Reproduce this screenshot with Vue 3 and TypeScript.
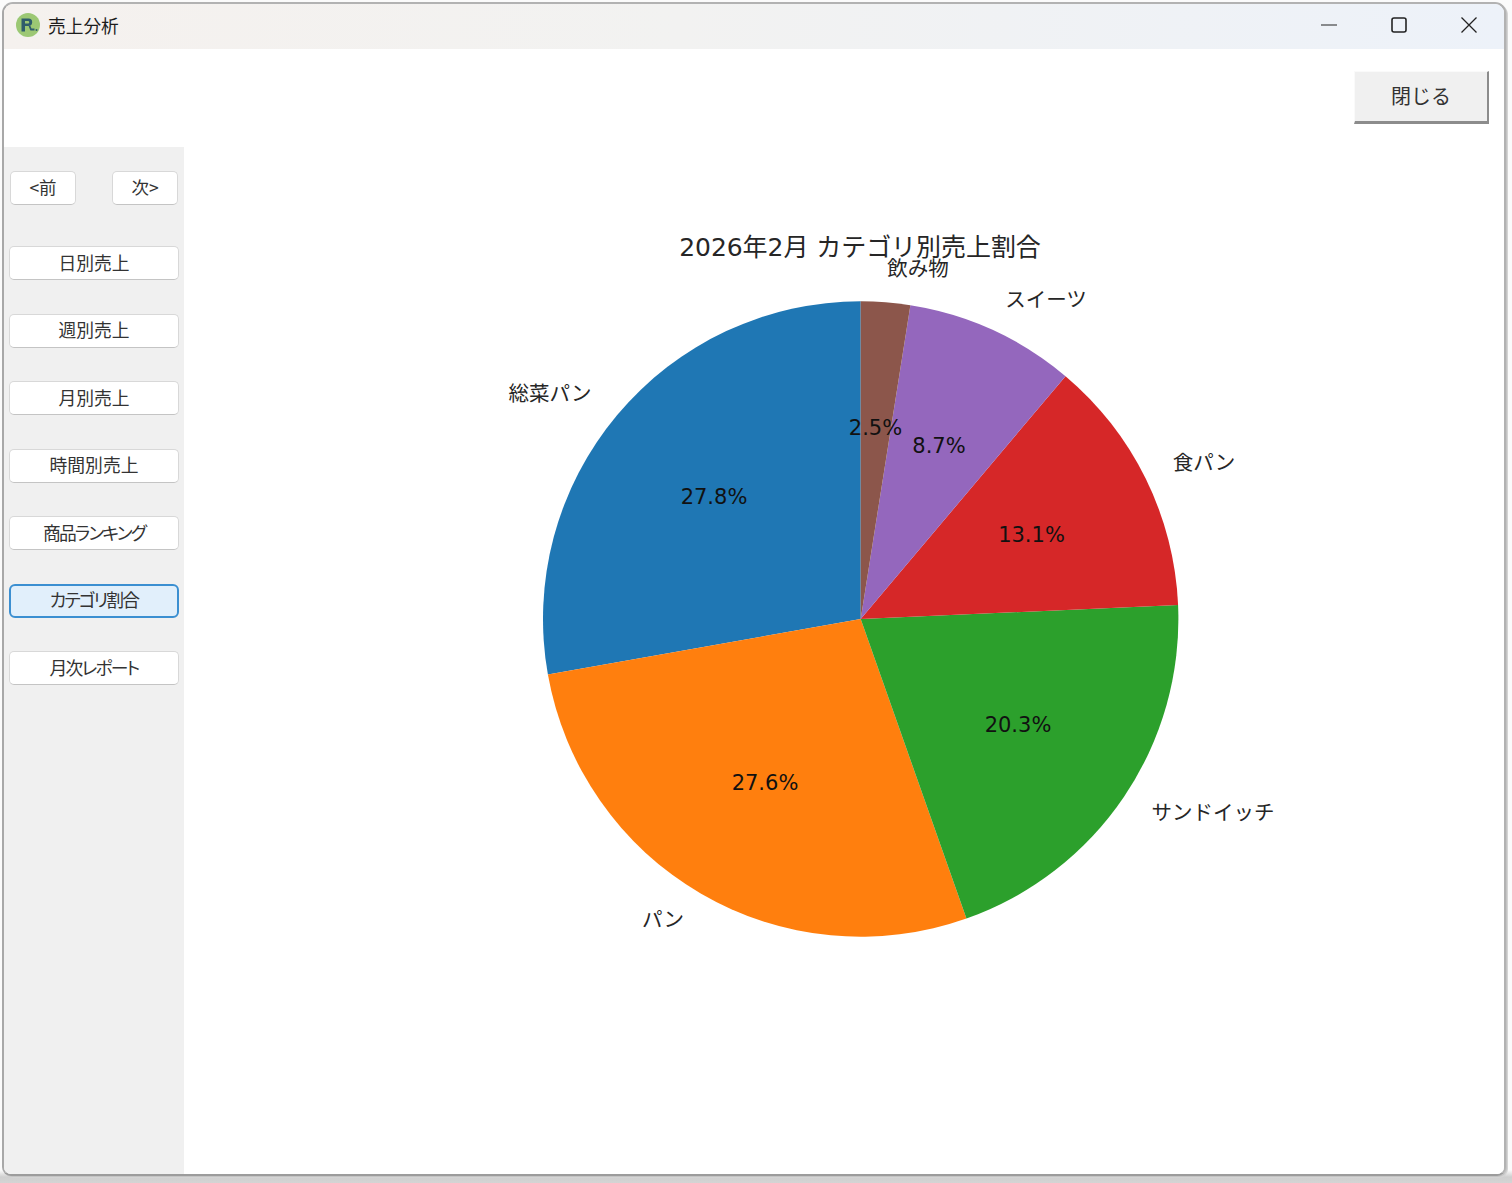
<script setup lang="ts">
interface Slice { pct: number; color: string }
const cx = 676.7
const cy = 472
const r = 317.7
const data: Slice[] = [
  { pct: 27.8, color: '#1f77b4' },
  { pct: 27.6, color: '#ff7f0e' },
  { pct: 20.3, color: '#2ca02c' },
  { pct: 13.15, color: '#d62728' },
  { pct: 8.65, color: '#9467bd' },
  { pct: 2.5, color: '#8c564b' },
]
let acc = 0
const slices = data.map((s) => {
  const a0 = (acc / 100) * Math.PI * 2
  acc += s.pct
  const a1 = (acc / 100) * Math.PI * 2
  const p = (a: number) => `${(cx - r * Math.sin(a)).toFixed(2)} ${(cy - r * Math.cos(a)).toFixed(2)}`
  return { color: s.color, d: `M${cx} ${cy} L${p(a0)} A${r} ${r} 0 0 0 ${p(a1)} Z` }
})
const navs = [
  { label: '日別売上', tight: false },
  { label: '週別売上', tight: false },
  { label: '月別売上', tight: false },
  { label: '時間別売上', tight: false },
  { label: '商品ランキング', tight: true },
  { label: 'カテゴリ割合', tight: true },
  { label: '月次レポート', tight: true },
]
const pcts = [
  { t: '27.8%', x: 530, y: 357 },
  { t: '27.6%', x: 581, y: 643 },
  { t: '20.3%', x: 834, y: 585 },
  { t: '13.1%', x: 847.5, y: 395 },
  { t: '8.7%', x: 755, y: 306 },
  { t: '2.5%', x: 691.5, y: 288 },
]
const labels = [
  { t: '総菜パン', x: 366, y: 254 },
  { t: 'パン', x: 479, y: 780 },
  { t: 'サンドイッチ', x: 1029, y: 673 },
  { t: '食パン', x: 1020, y: 323 },
  { t: 'スイーツ', x: 862, y: 160 },
  { t: '飲み物', x: 734, y: 129 },
]
</script>

<template>
  <div class="screen">
    <div class="window">
      <header class="titlebar">
        <div class="app">
          <svg class="logo" viewBox="0 0 24 24" width="24" height="24">
            <rect width="24" height="24" fill="#f3f3ef" />
            <circle cx="12" cy="12" r="12" fill="#9cc874" />
            <path d="M5.5 5.5h7a3.6 3.6 0 0 1 0 7.4H9v5.6H5.5z M9 8v2.5h3a1.2 1.2 0 0 0 0-2.5z" fill="#2f5d6b" fill-rule="evenodd" />
            <path d="M13.5 13l1.5 3.5h3.5" stroke="#2f5d6b" stroke-width="1.8" fill="none" />
            <circle cx="20.5" cy="17" r="1" fill="#2f5d6b" />
          </svg>
          <span class="app-title">売上分析</span>
        </div>
        <div class="controls">
          <svg width="16" height="16" viewBox="0 0 16 16"><path d="M0 8h16" stroke="#222" stroke-width="1.2" fill="none" /></svg>
          <svg width="16" height="16" viewBox="0 0 16 16"><rect x="1" y="1" width="14" height="14" rx="2" stroke="#222" stroke-width="1.6" fill="none" /></svg>
          <svg width="16" height="16" viewBox="0 0 16 16"><path d="M0.5 0.5l15 15M15.5 0.5l-15 15" stroke="#222" stroke-width="1.3" fill="none" /></svg>
        </div>
      </header>
      <div class="top-row">
        <button class="close">閉じる</button>
      </div>
      <div class="main">
        <aside class="sidebar">
          <div class="pager">
            <button class="btn small">&lt;前</button>
            <button class="btn small">次&gt;</button>
          </div>
          <div class="nav">
            <button
              v-for="n in navs"
              :key="n.label"
              class="btn"
              :class="{ active: n.label === 'カテゴリ割合', tight: n.tight }"
            >{{ n.label }}</button>
          </div>
        </aside>
        <div class="chart">
          <svg class="pie" width="1320" height="1027" viewBox="0 0 1320 1027">
            <path v-for="s in slices" :key="s.color" :d="s.d" :fill="s.color" />
            <text class="title" x="676" y="109" text-anchor="middle">2026年2月 カテゴリ別売上割合</text>
            <text v-for="l in labels" :key="l.t" class="label" :x="l.x" :y="l.y" text-anchor="middle">{{ l.t }}</text>
            <text v-for="p in pcts" :key="p.t" class="pct" :x="p.x" :y="p.y" text-anchor="middle">{{ p.t }}</text>
          </svg>
        </div>
      </div>
    </div>
  </div>
</template>

<style>
html, body { margin: 0; background: #fff; }
</style>

<style scoped>
.screen {
  width: 1512px;
  height: 1183px;
  box-sizing: border-box;
  padding: 2px 0 0 2px;
  background: linear-gradient(180deg, #fbfbfb 0, #fbfbfb 1170px, #cfcfcf 1177px, #d4d4d4 100%);
  overflow: hidden;
}
.window {
  width: 1504px;
  height: 1174px;
  box-sizing: border-box;
  border: 2px solid #b2b2b2;
  border-bottom-color: #9c9c9c;
  border-left-color: #a8a8a8;
  border-radius: 11px 11px 9px 9px;
  overflow: hidden;
  display: flex;
  flex-direction: column;
  background: #fff;
  box-shadow: 1px 1px 0 #c4c4c4, 2px 2px 0 #d4d4d4;
  font-family: "Noto Sans CJK JP", sans-serif;
}
.titlebar {
  height: 45px;
  flex: none;
  display: flex;
  align-items: center;
  justify-content: space-between;
  padding: 0 27px 3px 12px;
  box-sizing: border-box;
  background: linear-gradient(90deg, #f5f1ee 0%, #f2f2f1 45%, #edf2f9 100%);
}
.app { display: flex; align-items: center; gap: 8px; }
.app-title { font-size: 17.7px; color: #1c1c1c; line-height: 24px; }
.controls { display: flex; gap: 54px; align-items: center; }
.top-row {
  height: 98px;
  flex: none;
  display: flex;
  justify-content: flex-end;
  padding: 22px 15px 0 0;
  box-sizing: border-box;
}
.close {
  width: 135px;
  height: 53px;
  box-sizing: border-box;
  border: 0;
  border-right: 2px solid #8c8c8c;
  border-bottom: 3px solid #8c8c8c;
  border-top: 1px solid #fafafa;
  border-left: 1px solid #fafafa;
  background: #f0f0f0;
  font: 20px/46px "Noto Sans CJK JP", sans-serif;
  color: #333;
  padding: 0 0 2px;
}
.main { flex: 1; display: flex; min-height: 0; }
.sidebar {
  width: 180px;
  flex: none;
  background: #f0f0f0;
  box-sizing: border-box;
  padding: 24px 5px 0 5px;
}
.pager { display: flex; justify-content: space-between; padding: 0 1px; }
.nav { display: flex; flex-direction: column; gap: 33.5px; margin-top: 41px; }
.btn {
  height: 34px;
  box-sizing: border-box;
  border: 1px solid #d8d8d8;
  border-bottom-color: #c4c4c4;
  border-radius: 5px;
  background: #fff;
  font: 17.8px "Noto Sans CJK JP", sans-serif;
  font-feature-settings: "palt";
  color: #333;
  padding: 0 0 3px;
}
.btn.small { width: 66px; font-size: 17.5px; }
.btn.tight { letter-spacing: -1.8px; }
.btn.active {
  background: #e1effb;
  border: 2px solid #3b8fd1;
  border-radius: 6px;
}
.chart { flex: 1; min-width: 0; background: #fff; }
.pie { display: block; }
.title { font: 25px "DejaVu Sans", "Noto Sans CJK JP", sans-serif; letter-spacing: -0.05px; fill: #262626; }
.label { font: 20.5px "Noto Sans CJK JP", sans-serif; fill: #262626; }
.pct { font: 21px "DejaVu Sans", sans-serif; fill: #111; }
</style>
